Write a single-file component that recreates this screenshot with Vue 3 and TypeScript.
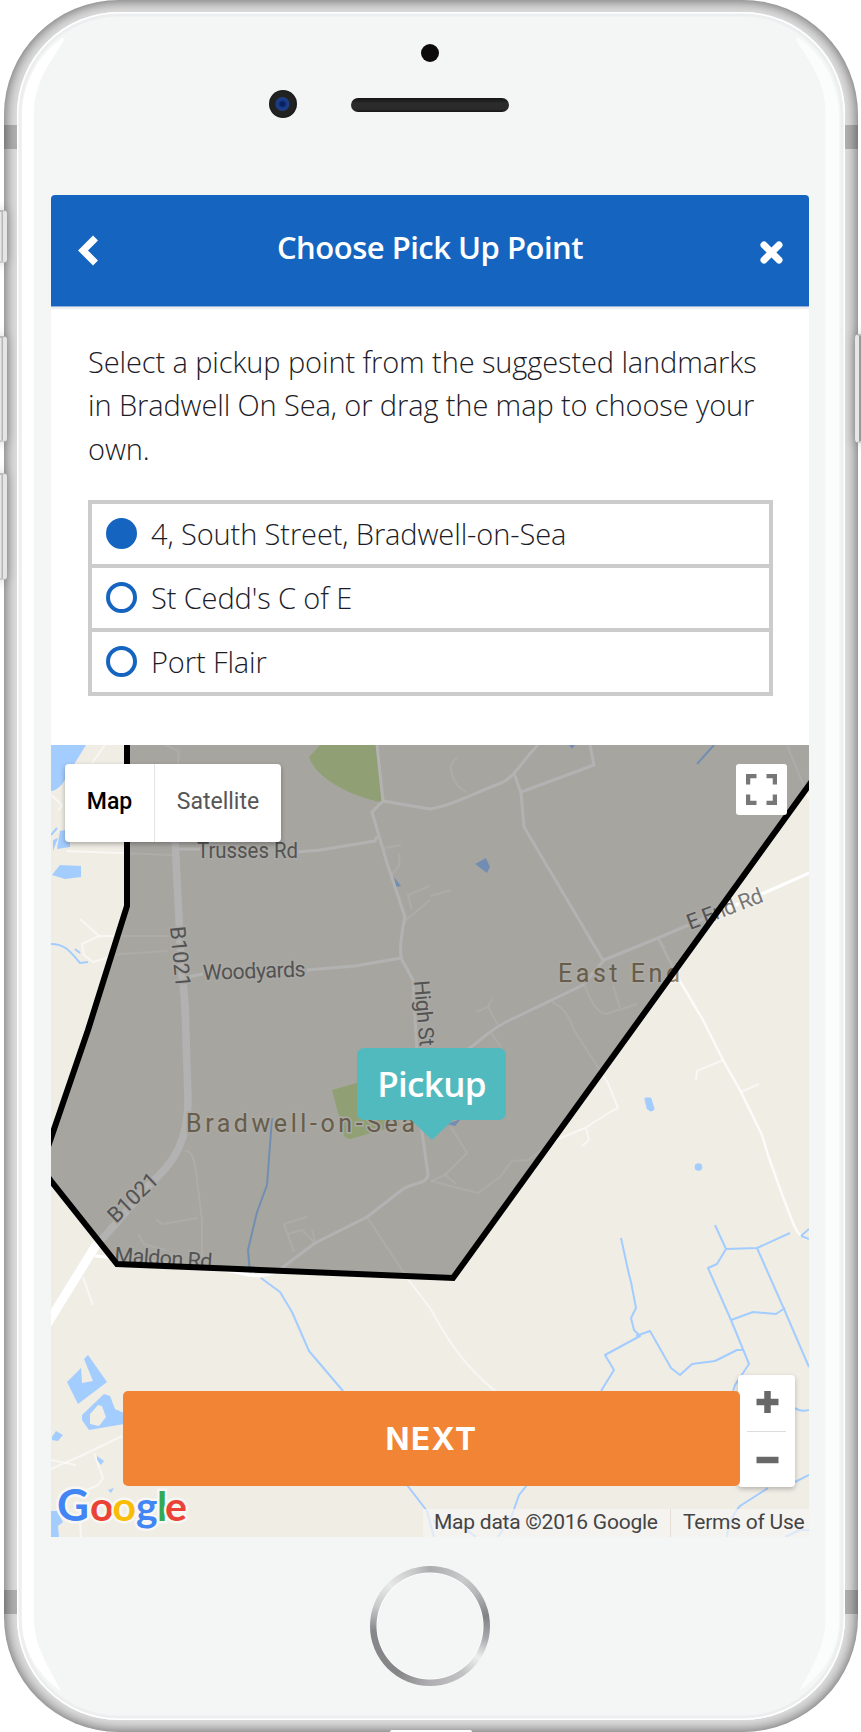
<script setup lang="ts">
import { ref } from 'vue'

interface Landmark { id: number; name: string }

const landmarks: Landmark[] = [
  { id: 1, name: '4, South Street, Bradwell-on-Sea' },
  { id: 2, name: "St Cedd's C of E" },
  { id: 3, name: 'Port Flair' },
]
const selected = ref(1)
const mapType = ref<'map' | 'satellite'>('map')

const minorRoads: string[] = [
  'M105 745L92 763', 'M51 795L62 805L58 811', 'M67 851L120 853L172 855', 'M165 745L179 751L178 764',
  'M80 919L99 936L168 936', 'M99 936L82 944L84 955L93 962L120 954L168 951',
  'M457 758C445 765 453 785 466 792', 'M787 745L809 798',
  'M401 845L384 848', 'M398 853C403 866 395 872 391 874', 'M430 886L408 895L412 910', 'M430 900L405 921',
  'M451 890L431 896', 'M658 938L665 948', 'M585 986C590 1000 597 1013 606 1014L637 1004',
  'M613 985L620 1008', 'M476 1012L488 1007L498 1025', 'M488 1007L492 999', 'M552 1002C566 1008 570 1020 574 1030L608 1083L618 1108L610 1112L585 1128L556 1140L528 1160L512 1161L500 1177L478 1193L431 1181',
  'M491 1033L501 1047', 'M586 1128L589 1140L582 1146', 'M451 1127L467 1153L445 1175L431 1181', 'M444 1174L456 1184',
  'M723 1060L697 1071L696 1080', 'M741 1092L759 1084',
  'M185 1151C192 1150 195 1160 197 1180L202 1220L202 1264', 'M156 1219L162 1224L198 1218',
  'M138 1234L144 1244L166 1250', 'M284 1224L307 1217', 'M284 1224L294 1252', 'M288 1234L302 1230L316 1244L312 1230',
  'M367 1217L410 1282L430 1308C445 1335 460 1362 495 1391', 'M83 1277L93 1305',
  'M51 1469L85 1454L122 1436', 'M51 1460L76 1465', 'M94 1453L103 1478L98 1485L81 1493', 'M80 1520L81 1537',
]
const roads: string[] = [
  'M377 745L383 801L372 812L387 863L405 917C401 935 400 950 401 958L413 980L421 1125L428 1174C428 1184 415 1182 403 1189L367 1217L315 1243L283 1267C273 1276 257 1278 240 1273L200 1266L95 1256',
  'M383 801L430 809C450 806 470 795 501 783C515 777 520 763 538 745',
  'M514 773L521 793L524 827L604 962', 'M521 792L594 765L590 745',
  'M455 1058C480 1043 485 1032 508 1021L583 985L604 960L658 938L764 893L809 873',
  'M178 849L200 849', 'M298 852L320 850L375 841L377 836', 'M187 977L203 974', 'M307 970L355 966L401 958',
]
const lanes: string[] = [
  'M658 938L681 983L703 1020L723 1060L741 1092L762 1135L768 1155L783 1197L793 1223C798 1235 802 1238 809 1239',
]
const streams: string[] = [
  'M51 944C65 944 70 951 80 963L88 962', 'M75 949L80 953', 'M51 835L57 828',
  'M272 1118L267 1185L257 1212L248 1250L250 1273', 'M261 1278L280 1292L292 1312L309 1351L343 1391', 'M407 1485L427 1511L434 1537',
  'M621 1238C626 1260 628 1272 631 1282L636 1308L631 1318L634 1330L640 1336L605 1355L614 1370L601 1391',
  'M636 1336L650 1331L671 1368L680 1375L692 1364L715 1361L737 1350L743 1350',
  'M715 1225L726 1249L757 1248L790 1233', 'M726 1249L717 1264L708 1268L731 1320L749 1364L735 1385L733 1391',
  'M731 1320L753 1312L776 1314L785 1308', 'M757 1248L784 1309L809 1367', 'M801 1236L809 1229', 'M801 1236L809 1239',
  'M795 1408Q800 1412 809 1410', 'M795 1482L809 1475', 'M768 1488L740 1506Q728 1520 727 1537',
  'M527 1485L519 1495L512 1515L498 1537', 'M433 1520L440 1527L463 1527L476 1537', 'M785 1537L800 1530L809 1530', 'M697 764L714 745',
]
</script>

<template>
  <main class="stage">
    <i class="side left mute" /><i class="side left up" /><i class="side left down" /><i class="side right power" />
    <div class="phone">
      <i class="band top" /><i class="band bottom" />
      <div class="face">
        <div class="bezel-top">
          <i class="sensor" />
          <div class="ear"><i class="camera" /><i class="speaker" /></div>
        </div>

        <div class="screen">
          <header class="bar">
            <svg class="back" width="22" height="34" viewBox="0 0 22 34"><path d="M17.5 4L5 16.5L17.5 29" /></svg>
            <h1>Choose Pick Up Point</h1>
            <svg class="close" width="26" height="26" viewBox="0 0 26 26"><path d="M5 5L20 20M20 5L5 20" /></svg>
          </header>

          <section class="choose">
            <p>Select a pickup point from the suggested landmarks<br>in Bradwell On Sea, or drag the map to choose your<br>own.</p>
            <ul>
              <li v-for="item in landmarks" :key="item.id" @click="selected = item.id">
                <i class="radio" :class="{ on: selected === item.id }" />
                <span>{{ item.name }}</span>
              </li>
            </ul>
          </section>

          <section class="map">
            <svg class="canvas" width="758" height="792" viewBox="51 745 758 792">
              <rect x="51" y="745" width="758" height="792" fill="#f0ede5" />
              <g fill="#a3ccff">
                <path d="M51 745H86L70 771Q61 790 51 791Z" /><path d="M60 831L70 829V847L57 849Z" /><path d="M53 840L58 838L53 851Z" />
                <path d="M52 875L60 865L81 866V877L65 879Z" /><path d="M88 1355L107 1382L78 1404L67 1382L81 1368L82 1383L93 1381L84 1359Z" />
                <path fill-rule="evenodd" d="M82 1415L104 1394L110 1396L115 1409L124 1413V1424L89 1430L82 1420ZM98 1405L90 1414V1424L99 1426L106 1417L102 1406Z" />
                <path d="M52 1437L56 1431L63 1435L58 1441L52 1440Z" /><path d="M97 1456L104 1461L101 1465L97 1460Z" /><path d="M108 1490L114 1488L111 1493Z" />
                <path d="M51 1511L57 1511L63 1522L58 1526L59 1537H51Z" />
                <path d="M475 864L486 858L490 867L487 873Z" /><path d="M394 877L401 886L396 887Z" /><path d="M569 745L575 745L572 749Z" />
                <path stroke="#a3ccff" stroke-width="3" stroke-linejoin="round" d="M646 1099L650 1099L653 1109L651 1110L648 1108Z" /><circle cx="698.5" cy="1167" r="3.8" /><path d="M447 1124L461 1119L455 1126Z" />
              </g>
              <g fill="#cee5a6"><path d="M320 745H376L382 800L380 802C350 796 316 778 309 757Z" /><path d="M332 1090L380 1076L400 1125L350 1139Q343 1139 342 1128Z" /></g>
              <g class="lines"><path v-for="d in minorRoads" :key="d" class="minor" :d="d" /><path v-for="d in lanes" :key="d" class="lane" :d="d" /><path v-for="d in roads" :key="d" class="road" :d="d" />
                <path class="major" d="M175 839L178 900L181 960L185 1005L188 1100C188 1140 175 1162 150 1184L105 1236L93 1248" /><path class="major wide" d="M96 1245L46 1326" />
                <path v-for="d in streams" :key="d" class="stream" :d="d" />
              </g>
              <g class="labels">
                <text x="197" y="858" textLength="101" lengthAdjust="spacingAndGlyphs">Trusses Rd</text>
                <text transform="translate(170 927) rotate(84.5)" textLength="61">B1021</text>
                <text transform="translate(203 980) rotate(-2)" textLength="103">Woodyards</text>
                <text transform="translate(414 981) rotate(85)" textLength="66">High St</text>
                <text transform="translate(690 930) rotate(-21)" textLength="80">E End Rd</text>
                <text transform="translate(116 1224) rotate(-44)" textLength="61">B1021</text>
                <text transform="translate(114 1262) rotate(4)" textLength="98">Maldon Rd</text>
                <text class="town" x="558" y="982" textLength="122">East End</text>
                <text class="town" x="186" y="1132" textLength="229">Bradwell-on-Sea</text>
              </g>
              <path class="zone" d="M127 730V906L88 1030L51 1138L45 1155V1173L51 1181L117 1264L453 1278L822 767V730Z" />
              <g class="logo"><text><tspan x="57" class="cap" fill="#4285f4">G</tspan><tspan x="90" fill="#ea4335">o</tspan><tspan x="112.500" fill="#fbbc05">o</tspan><tspan x="136" fill="#4285f4">g</tspan><tspan x="157" fill="#34a853">l</tspan><tspan x="165" fill="#ea4335">e</tspan></text></g>
            </svg>

            <div class="types">
              <span :class="{ active: mapType === 'map' }" @click="mapType = 'map'">Map</span>
              <span :class="{ active: mapType === 'satellite' }" @click="mapType = 'satellite'">Satellite</span>
            </div>
            <div class="full"><svg width="31" height="31" viewBox="0 0 31 31"><path d="M2 10.500V2H10.500M20.500 2H29V10.500M29 20.500V29H20.500M10.500 29H2V20.500" /></svg></div>
            <div class="pin">Pickup</div>
            <div class="credit"><span class="data">Map data ©2016 Google</span><span class="terms">Terms of Use</span></div>
            <div class="zoom">
              <svg width="57" height="56" viewBox="0 0 57 56"><path d="M18.500 27H40.500M29.500 16V38" /></svg>
              <i />
              <svg width="57" height="55" viewBox="0 0 57 55"><path d="M18.500 28H40.500" /></svg>
            </div>
            <button class="next">NEXT</button>
          </section>
        </div>
        <i class="home" />
      </div>
      <svg class="shine" width="861" height="1732" viewBox="0 0 861 1732">
        <path fill="#fff" d="M22 112C23 83 39 54 61 39Q65 36 63 42C47 67 34 85 34 112V1620C34 1645 49 1668 61 1691C38 1675 22 1650 22 1620Z" />
        <path fill="#fbfcfc" d="M839 112C838 83 822 54 800 39Q794 36 797 42C814 67 825.500 85 825.500 112V1620C825.500 1645 812 1668 799 1691C823 1675 839 1650 839 1620Z" />
      </svg>
      <i class="dock" />
    </div>
  </main>
</template>

<style>
html, body { margin: 0; background: #fff; }
</style>

<style scoped>
* { box-sizing: border-box; }
.stage { position: relative; width: 861px; height: 1732px; overflow: hidden; padding: 0 3px 0 4px; background: #fff; }
.phone { height: 1732px; padding: 12px 13px; border-radius: 115px; background: #dedede; box-shadow: inset 0 0 13px 1px rgba(0, 0, 0, .55); }
.face { display: flex; flex-direction: column; align-items: center; height: 1708px; padding-right: 2px; border-radius: 102px; background: #f4f6f6; box-shadow: inset 0 0 0 1.5px #fff, inset 0 0 0 4.500px #eceef0; }
.shine { position: absolute; left: 0; top: 0; pointer-events: none; }
.band { position: absolute; left: 4px; width: 854px; height: 24px; border: solid rgba(0, 0, 0, .2); border-width: 0 13px; }
.band.top { top: 125px; }
.band.bottom { top: 1590px; }
.side { position: absolute; z-index: 2; border-radius: 4px; border: 2px solid #ccc; border-left-color: #eee; border-top-color: #bbb; box-shadow: 0 0 12px rgba(0, 0, 0, .22); }
.side.left { left: -6px; width: 13px; border-right: 4px solid #e5e5e5; background: linear-gradient(90deg, #fff 50%, #aaa); }
.side.right { left: 855px; width: 12px; border-left: 4px solid #e7e7e7; background: #999; }
.mute { top: 210px; height: 53px; }
.up { top: 336px; height: 106px; }
.down { top: 473px; height: 107px; }
.power { top: 334px; height: 109px; }
.bezel-top { display: flex; flex-direction: column; align-items: center; height: 183px; width: 100%; flex: none; padding-top: 32px; }
.sensor { width: 18px; height: 18px; border-radius: 50%; background: #0c0a0b; }
.ear { display: flex; align-items: center; gap: 54px; margin: 28px 82px 0 0; }
.camera { width: 28px; height: 28px; border-radius: 50%; background: radial-gradient(circle at 48% 50%, #0a1f5c 0 2px, #173b8c 4px, #1d3f80 6.500px, #222 7.500px, #222 11px, #0c0c0c); }
.speaker { width: 158px; height: 14px; border-radius: 7px; background: linear-gradient(#151515, #2c2c2c 40%, #2a2a2a 80%, #151515); margin-top: 2px; }
.screen { display: flex; flex-direction: column; width: 758px; height: 1342px; flex: none; border-radius: 4px 4px 0 0; overflow: hidden; background: #fff; }
.bar { display: flex; justify-content: space-between; align-items: center; height: 112px; padding: 0 24px 0 27px; background: #1565c0; border-bottom: 1px solid #8fb0dc; box-shadow: 0 2px 1px #eee; color: #fff; flex: none; }
.bar h1 { margin: -8px -1px 0 0; font: 600 31px/40px "Open Sans", sans-serif; letter-spacing: -.5px; }
.bar svg { fill: none; stroke: #fff; }
.back { stroke-width: 7; }
.close { stroke-width: 7; stroke-linecap: round; margin-top: 4px; }
.choose { height: 438px; flex: none; padding: 33px 36px 0 37px; font: 300 29px/43.3px "Open Sans", sans-serif; letter-spacing: -.11px; color: #1c1c28; }
.choose p { margin: 0; white-space: nowrap; }
.choose ul { list-style: none; margin: 30px 0 0; padding: 0; border: 4px solid #ccc; }
.choose li { display: flex; align-items: center; gap: 14px; height: 64px; padding-left: 14px; border-bottom: 4px solid #ccc; white-space: nowrap; }
.choose li:last-child { height: 60px; border-bottom: 0; }
.radio { width: 31px; height: 31px; border: 4px solid #1565c0; border-radius: 50%; }
.radio.on { background: #1565c0; }
.map { position: relative; height: 792px; overflow: hidden; font-family: Roboto, sans-serif; }
.canvas { display: block; }
.lines path { fill: none; stroke: #fff; stroke-linejoin: round; }
.lines .minor { stroke-width: 2; opacity: .55; }
.lines .lane { stroke-width: 2.500; opacity: .75; }
.lines .road { stroke-width: 3; }
.lines .major { stroke-width: 7.500; }
.lines .wide { stroke-width: 9; }
.lines .stream { stroke: #a3ccff; stroke-width: 2; }
.labels { font-size: 21.500px; fill: #777; stroke: #f4f2ec; stroke-width: 3px; paint-order: stroke; }
.labels .town { font-size: 25px; fill: #94866a; }
.zone { fill: rgba(0, 0, 0, .3); stroke: #000; stroke-width: 6; }
.logo text { transform: translateY(1521px); font: 700 41px Lato, sans-serif; stroke: #f8f7f3; stroke-width: 5px; paint-order: stroke; }
.logo .cap { font-size: 44px; }
.types { position: absolute; left: 14px; top: 19px; display: flex; height: 78px; background: #fff; border-radius: 4px; box-shadow: 0 2px 5px rgba(0, 0, 0, .3); font-size: 23px; line-height: 75px; color: #565656; }
.types span { width: 126px; text-align: center; }
.types span:first-child { width: 90px; border-right: 1px solid #e4e4e4; }
.types .active { color: #000; font-weight: 500; }
.full { position: absolute; left: 685px; top: 19px; display: grid; place-items: center; width: 51px; height: 51px; border-radius: 3px; background: #fff; }
.full path { fill: none; stroke: #777; stroke-width: 4.500; }
.pin { position: absolute; left: 306px; top: 303px; width: 149px; height: 72px; border-radius: 7px; background: #51babf; color: #fff; font: 600 35px/71px "Open Sans", sans-serif; letter-spacing: -.7px; text-align: center; }
.pin::after { content: ""; position: absolute; left: 53px; top: 71px; border: solid transparent; border-width: 21px 22px 0; border-top-color: #51babf; }
.credit { position: absolute; right: 0; bottom: 0; display: flex; align-items: center; width: 386px; height: 28px; padding-left: 11px; background: rgba(245, 245, 245, .7); color: #444; font-size: 21px; line-height: 26px; letter-spacing: -.24px; white-space: nowrap; }
.credit span { height: 28px; }
.data { width: 237px; border-right: 1px solid #e7ded8; }
.terms { padding-left: 12px; }
.zoom { position: absolute; left: 687px; top: 630px; display: flex; flex-direction: column; align-items: center; width: 57px; height: 112px; border-radius: 4px; background: #fff; box-shadow: 0 2px 5px rgba(0, 0, 0, .25); }
.zoom i { width: 39px; height: 1px; background: #ddd; }
.zoom path { fill: none; stroke: #686868; stroke-width: 6.500; }
.next { position: absolute; left: 72px; top: 646px; width: 617px; height: 95px; padding: 0 0 1px; border: 0; border-radius: 5px; background: #f18435; color: #fff; font: 700 31.5px/93px Inter, sans-serif; letter-spacing: 1.4px; }
.home { width: 120px; height: 120px; margin-top: 29px; border-radius: 50%; flex: none; background: radial-gradient(circle, #f4f6f6 52.500px, #fff 53px, transparent 54px), conic-gradient(#aaacae, #c8cacb 35deg, #b4b6b8 55deg, #808286 80deg, #a5a9ac 102deg, #eee 123deg, #c2c2c4 145deg, #b0aeb2 180deg, #858587 215deg, #88888c 265deg, #cacacc 290deg, #e8e8e8 315deg, #c7c7c7 345deg, #aaacae); }
.dock { position: absolute; left: 390px; top: 1730px; width: 82px; height: 4px; border-radius: 4px; background: #fff; }
</style>
